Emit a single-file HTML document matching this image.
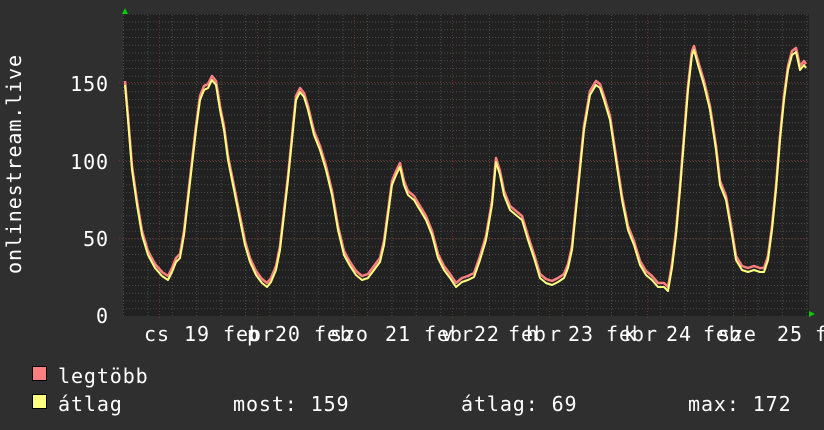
<!DOCTYPE html>
<html><head><meta charset="utf-8"><style>
html,body{margin:0;padding:0;background:#2f2f2f;}
svg{display:block}
text{font-family:"DejaVu Sans Mono","Liberation Mono",monospace;font-size:20px;letter-spacing:0.9px;fill:#fff}
</style></head><body>
<svg width="824" height="430" viewBox="0 0 824 430" xmlns="http://www.w3.org/2000/svg">
<defs>
<pattern id="minv" x="123" y="0" width="24.4" height="430" patternUnits="userSpaceOnUse">
<line x1="0.5" y1="0" x2="0.5" y2="430" stroke="#4a4a4a" stroke-dasharray="1,2"/>
</pattern>
<pattern id="minh" x="0" y="316" width="824" height="7.75" patternUnits="userSpaceOnUse">
<line x1="0" y1="0.5" x2="824" y2="0.5" stroke="#4a4a4a" stroke-dasharray="1,2"/>
</pattern>
</defs>
<rect width="824" height="430" fill="#2f2f2f"/>
<rect x="123" y="14" width="686" height="302" fill="#212121"/>
<rect x="123" y="14" width="686" height="302" fill="url(#minv)"/>
<rect x="123" y="14" width="686" height="302" fill="url(#minh)"/>
<g stroke="#6a3030" stroke-dasharray="1,2">
<line x1="159.5" y1="14" x2="159.5" y2="320"/>
<line x1="257.5" y1="14" x2="257.5" y2="320"/>
<line x1="354.5" y1="14" x2="354.5" y2="320"/>
<line x1="452.5" y1="14" x2="452.5" y2="320"/>
<line x1="549.5" y1="14" x2="549.5" y2="320"/>
<line x1="647.5" y1="14" x2="647.5" y2="320"/>
<line x1="745.5" y1="14" x2="745.5" y2="320"/>
<line x1="119" y1="82.5" x2="809" y2="82.5"/>
<line x1="119" y1="160.5" x2="809" y2="160.5"/>
<line x1="119" y1="238.5" x2="809" y2="238.5"/>
</g>
<polygon points="122,14 128,14 125,8" fill="#00cc00"/>
<polygon points="809,311 809,317 815,314" fill="#00cc00"/>
<g fill="none" stroke-linejoin="round">
<polyline transform="translate(0,-4)" stroke="#ff7f80" stroke-width="2.5" points="125,85 128,120 132,170 137,205 142,235 148,255 155,268 162,276 168,280 172,272 176,262 180,258 184,235 188,200 192,165 196,130 200,100 204,90 208,88 212,80 216,85 220,110 224,130 228,160 232,180 236,200 240,220 245,245 250,262 256,275 262,283 267,287 271,282 276,270 280,250 284,215 288,180 292,140 296,100 300,92 304,97 308,110 314,135 320,150 326,170 332,195 338,230 344,255 350,266 356,275 362,280 368,278 374,270 380,262 384,245 388,215 392,185 396,175 400,167 404,185 408,195 414,200 420,210 426,220 432,235 438,258 444,270 450,278 456,287 462,282 468,280 474,277 480,260 486,240 492,205 496,162 500,175 504,195 510,210 516,215 522,220 528,240 534,258 540,278 546,283 552,285 558,282 564,278 568,268 572,250 576,210 580,170 584,130 590,95 596,85 600,88 604,100 610,120 616,160 622,200 628,230 634,245 640,265 646,275 652,280 658,287 664,287 668,291 672,268 676,235 680,190 684,140 688,90 692,55 694,50 698,65 704,85 710,110 716,150 720,185 726,200 732,235 736,260 742,270 748,272 754,270 760,272 764,272 768,260 772,230 776,190 780,140 784,100 788,70 792,55 796,52 800,70 804,65 806,68"/>
<polyline stroke="#ffff80" stroke-width="2" points="125,85 128,120 132,170 137,205 142,235 148,255 155,268 162,276 168,280 172,272 176,262 180,258 184,235 188,200 192,165 196,130 200,100 204,90 208,88 212,80 216,85 220,110 224,130 228,160 232,180 236,200 240,220 245,245 250,262 256,275 262,283 267,287 271,282 276,270 280,250 284,215 288,180 292,140 296,100 300,92 304,97 308,110 314,135 320,150 326,170 332,195 338,230 344,255 350,266 356,275 362,280 368,278 374,270 380,262 384,245 388,215 392,185 396,175 400,167 404,185 408,195 414,200 420,210 426,220 432,235 438,258 444,270 450,278 456,287 462,282 468,280 474,277 480,260 486,240 492,205 496,162 500,175 504,195 510,210 516,215 522,220 528,240 534,258 540,278 546,283 552,285 558,282 564,278 568,268 572,250 576,210 580,170 584,130 590,95 596,85 600,88 604,100 610,120 616,160 622,200 628,230 634,245 640,265 646,275 652,280 658,287 664,287 668,291 672,268 676,235 680,190 684,140 688,90 692,55 694,50 698,65 704,85 710,110 716,150 720,185 726,200 732,235 736,260 742,270 748,272 754,270 760,272 764,272 768,260 772,230 776,190 780,140 784,100 788,70 792,55 796,52 800,70 804,65 806,68"/>
</g>
<g text-anchor="end">
<text x="109" y="91">150</text>
<text x="109" y="169">100</text>
<text x="109" y="246">50</text>
<text x="109" y="323">0</text>
</g>
<text transform="translate(21,164) rotate(-90)" text-anchor="middle">onlinestream.live</text>
<g>
<text x="144" y="341">cs</text><text x="184" y="341">19</text>
<text x="223" y="341">feb</text><text x="247" y="341">p</text><text x="262" y="341">r20</text>
<text x="314" y="341">feb</text><text x="330" y="341">szo</text><text x="385" y="341">21</text>
<text x="424" y="341">feb</text><text x="441" y="341">v</text><text x="461" y="341">r22</text>
<text x="508" y="341">feb</text><text x="526" y="341">h</text><text x="549" y="341">r</text><text x="568" y="341">23</text>
<text x="606" y="341">feb</text><text x="624" y="341">k</text><text x="645" y="341">r</text><text x="666" y="341">24</text>
<text x="703" y="341">feb</text><text x="718" y="341">sze</text><text x="777" y="341">25</text><text x="815" y="341">f</text>
</g>
<rect x="32.5" y="366.5" width="14" height="14" fill="#ff7f80" stroke="#000"/>
<rect x="32.5" y="394.5" width="14" height="14" fill="#ffff80" stroke="#000"/>
<text x="58" y="383">legtöbb</text>
<text x="58" y="411">átlag</text>
<text x="233" y="411">most: 159</text>
<text x="461" y="411">átlag: 69</text>
<text x="688" y="411">max: 172</text>
</svg>
</body></html>
